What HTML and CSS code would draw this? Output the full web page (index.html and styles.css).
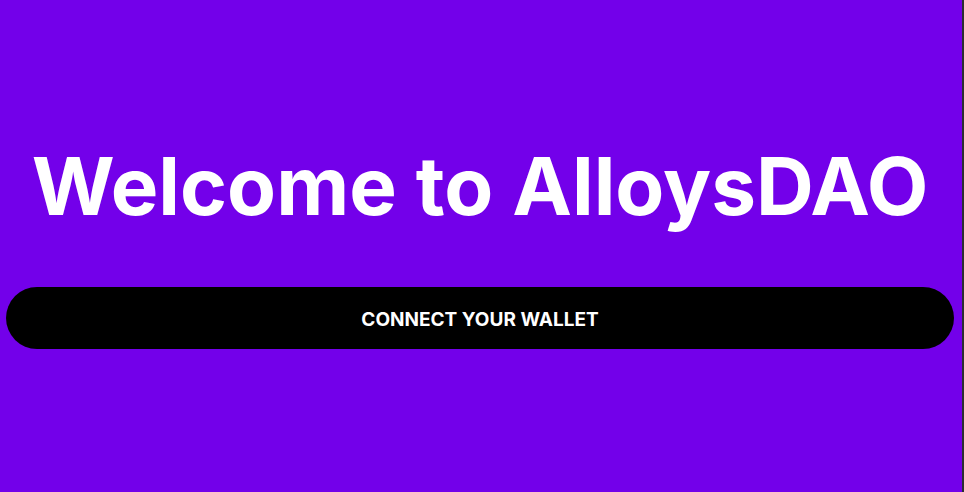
FILE: index.html
```html
<!DOCTYPE html>
<html lang="en">
<head>
<meta charset="utf-8">
<title>AlloysDAO</title>
<link rel="stylesheet" href="styles.css">
</head>
<body>
<div class="page">
  <main class="hero">
    <h1 class="title">Welcome to AlloysDAO</h1>
    <button class="connect" type="button">CONNECT YOUR WALLET</button>
  </main>
  <div class="edge"></div>
</div>
</body>
</html>
```
FILE: styles.css
```css
html, body {
  margin: 0;
  padding: 0;
  height: 100%;
}
body {
  background: #7300ea;
  font-family: Inter, "Noto Sans", sans-serif;
}
.page {
  display: flex;
  height: 100%;
}
.hero {
  flex: 1;
  display: flex;
  flex-direction: column;
  align-items: stretch;
  padding: 136px 8px 0 6px;
  gap: 51px;
}
.edge {
  width: 2px;
  background: #2b2d33;
}
.title {
  margin: 0;
  color: #ffffff;
  font-size: 80px;
  font-weight: 700;
  line-height: 100px;
  text-align: center;
  letter-spacing: 0;
}
.connect {
  height: 62px;
  padding: 2px 0 0;
  border: none;
  border-radius: 31px;
  background: #000000;
  color: #ffffff;
  font-family: Inter, "Noto Sans", sans-serif;
  font-size: 19px;
  font-weight: 700;
  cursor: pointer;
}
```
